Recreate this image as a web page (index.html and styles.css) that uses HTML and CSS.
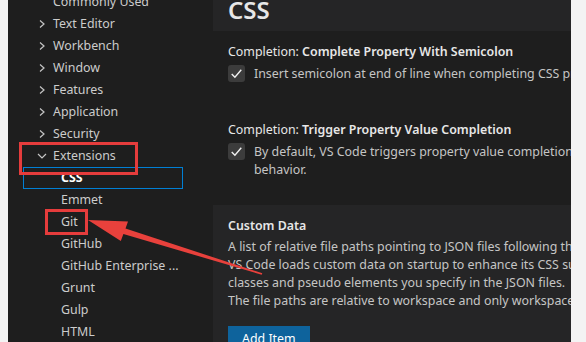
FILE: index.html
```html
<!DOCTYPE html>
<html lang="en">
<head>
    <meta charset="UTF-8">
    <title>Settings - CSS</title>
    <link rel="stylesheet" href="styles.css">
</head>
<body>
    <div class="window">
        <!-- Tabla de contenidos -->
        <div class="sidebar">
            <div class="tree">
                <div class="row"><span class="chev"></span>Commonly Used</div>
                <div class="row"><svg class="chev" viewBox="0 0 10 10"><polyline points="3,1.5 7,5 3,8.5"/></svg>Text Editor</div>
                <div class="row"><svg class="chev" viewBox="0 0 10 10"><polyline points="3,1.5 7,5 3,8.5"/></svg>Workbench</div>
                <div class="row"><svg class="chev" viewBox="0 0 10 10"><polyline points="3,1.5 7,5 3,8.5"/></svg>Window</div>
                <div class="row"><svg class="chev" viewBox="0 0 10 10"><polyline points="3,1.5 7,5 3,8.5"/></svg>Features</div>
                <div class="row"><svg class="chev" viewBox="0 0 10 10"><polyline points="3,1.5 7,5 3,8.5"/></svg>Application</div>
                <div class="row"><svg class="chev" viewBox="0 0 10 10"><polyline points="3,1.5 7,5 3,8.5"/></svg>Security</div>
                <div class="row"><svg class="chev" viewBox="0 0 10 10"><polyline points="1,3 5,7 9,3"/></svg>Extensions</div>
                <div class="row child selected">CSS</div>
                <div class="row child">Emmet</div>
                <div class="row child">Git</div>
                <div class="row child">GitHub</div>
                <div class="row child">GitHub Enterprise ...</div>
                <div class="row child">Grunt</div>
                <div class="row child">Gulp</div>
                <div class="row child">HTML</div>
            </div>
        </div>

        <!-- Ajustes -->
        <div class="main">
            <div class="group-title">CSS</div>

            <div class="setting">
                <div class="title">Completion: <b>Complete Property With Semicolon</b></div>
                <div class="check-line">
                    <span class="checkbox"><svg viewBox="0 0 16 16"><polyline points="3.5,8.5 6.5,11.5 12.5,4.5"/></svg></span>
                    <span class="desc">Insert semicolon at end of line when completing CSS properties.</span>
                </div>
            </div>

            <div class="setting">
                <div class="title">Completion: <b>Trigger Property Value Completion</b></div>
                <div class="check-line">
                    <span class="checkbox"><svg viewBox="0 0 16 16"><polyline points="3.5,8.5 6.5,11.5 12.5,4.5"/></svg></span>
                    <span class="desc">By default, VS Code triggers property value completion after selecting a CSS property. Use this setting to disable this<br>behavior.</span>
                </div>
            </div>

            <div class="setting focused">
                <div class="title"><b>Custom Data</b></div>
                <div class="desc">A list of relative file paths pointing to JSON files following the custom data format.<br>VS Code loads custom data on startup to enhance its CSS support for CSS custom properties (variables), at-rules, pseudo-<br>classes and pseudo elements you specify in the JSON files.<br>The file paths are relative to workspace and only workspace folder settings are considered.</div>
                <button class="add-btn">Add Item</button>
            </div>
        </div>
    </div>

    <!-- Anotaciones -->
    <div class="mark mark-ext"></div>
    <div class="mark mark-git"></div>
    <svg class="arrow" viewBox="0 0 586 342">
        <polygon points="88,220 128,221.5 125.5,228.6 262.3,273.3 261.7,274.7 123.4,234 120.8,241"/>
    </svg>
</body>
</html>
```

FILE: styles.css
```css
body {
    margin: 0;
    background-color: #f3f3f3;
    font-family: "Noto Sans", "Open Sans", sans-serif;
    font-size: 12.4px;
    position: relative;
    height: 342px;
    overflow: hidden;
}

.window {
    margin-left: 8px;
    width: 563px;
    height: 342px;
    display: flex;
    background-color: #1e1e1e;
    overflow: hidden;
}

.sidebar {
    width: 205px;
    flex-shrink: 0;
}

.tree {
    margin-top: -9px;
    padding-left: 15px;
    width: 160px;
}

.row {
    height: 22px;
    line-height: 22px;
    color: #cccccc;
    display: flex;
    align-items: center;
    white-space: nowrap;
    box-sizing: border-box;
}

.chev {
    width: 10px;
    height: 10px;
    margin-left: 14px;
    margin-right: 6px;
    flex-shrink: 0;
}

.chev polyline {
    fill: none;
    stroke: #c5c5c5;
    stroke-width: 1.2;
}

.row.child {
    padding-left: 38px;
}

.row.selected {
    border: 1px solid #007fd4;
    padding-left: 37px;
    color: #ffffff;
    font-weight: bold;
}

.main {
    flex: 1;
    min-width: 0;
    overflow: hidden;
}

.group-title {
    height: 31px;
    background-color: #252526;
    padding-left: 15px;
    font-size: 24px;
    font-weight: 600;
    line-height: 19px;
    color: #e7e7e7;
    overflow: hidden;
}

.setting {
    padding: 12px 15px 26px;
    white-space: nowrap;
}

.setting.focused {
    background-color: #252526;
    padding-top: 12px;
}

.title {
    line-height: 18px;
    color: #e7e7e7;
}

.title b {
    font-weight: 600;
}

.check-line {
    display: flex;
    align-items: flex-start;
    margin-top: 4px;
}

.checkbox {
    width: 17px;
    height: 17px;
    border-radius: 3px;
    background-color: #3c3c3c;
    flex-shrink: 0;
    margin-right: 9px;
    display: flex;
}

.checkbox svg {
    width: 17px;
    height: 17px;
}

.checkbox polyline {
    fill: none;
    stroke: #f0f0f0;
    stroke-width: 1.3;
}

.desc {
    line-height: 18px;
    color: #c5c5c5;
}

.focused .desc {
    margin-top: 3px;
}

.add-btn {
    margin-top: 16px;
    background-color: #0e639c;
    color: #ffffff;
    border: none;
    font-family: inherit;
    font-size: 12.4px;
    padding: 4px 14px;
    line-height: 18px;
}

.mark {
    position: absolute;
    border: 3px solid #e53c3c;
    box-sizing: border-box;
}

.mark-ext {
    left: 19px;
    top: 142px;
    width: 119px;
    height: 33px;
}

.mark-git {
    left: 45px;
    top: 209px;
    width: 43px;
    height: 26px;
}

.arrow {
    position: absolute;
    left: 0;
    top: 0;
    width: 586px;
    height: 342px;
    pointer-events: none;
}

.arrow polygon {
    fill: #e8413c;
}
```
